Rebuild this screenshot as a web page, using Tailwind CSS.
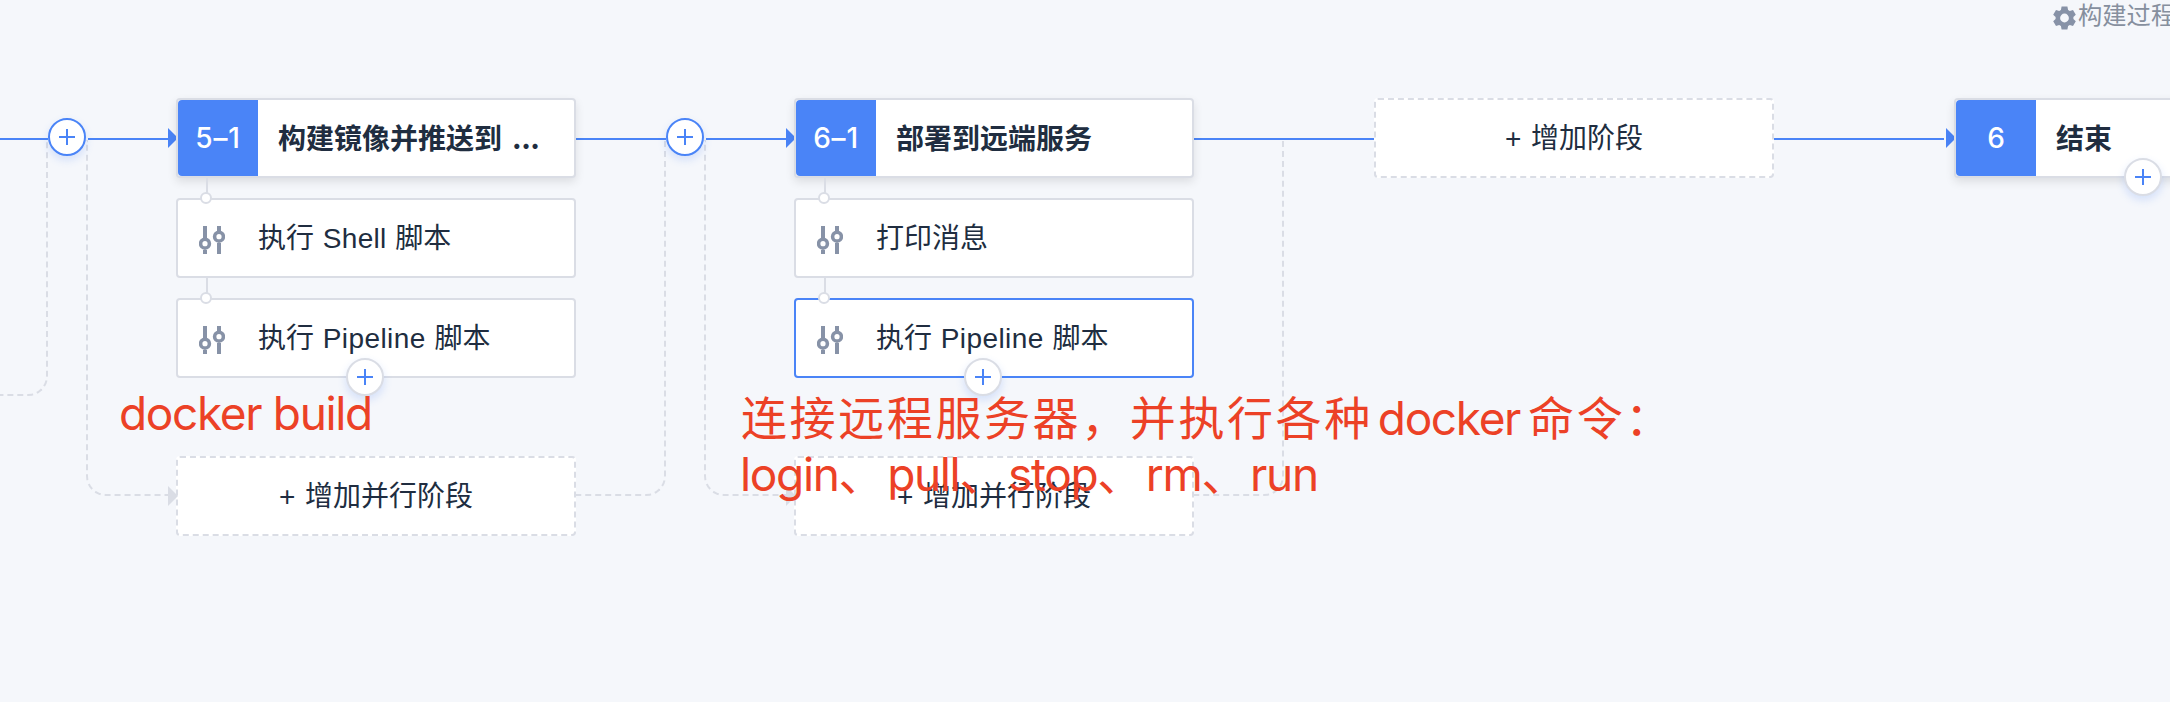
<!DOCTYPE html>
<html lang="zh-CN">
<head>
<meta charset="utf-8">
<title>构建流程</title>
<script src="https://cdn.jsdelivr.net/npm/@tailwindcss/browser@4"></script>
</head>
<body class="bg-[#f5f7fb]">
<svg class="hidden">
  <symbol id="sliders" viewBox="0 0 26 28">
    <path d="M6 0v13M6 24v4M20 0v6M20 17v11" fill="none" stroke="#8792a7" stroke-width="4"/>
    <circle cx="6" cy="17.7" r="4.4" fill="#fff" stroke="#8792a7" stroke-width="3.6"/>
    <circle cx="20" cy="10.7" r="4.4" fill="#fff" stroke="#8792a7" stroke-width="3.6"/>
  </symbol>
  <symbol id="plus" viewBox="0 0 16 16">
    <path d="M8 0v16M0 8h16" fill="none" stroke="#4a84f7" stroke-width="2"/>
  </symbol>
  <symbol id="arrow" viewBox="0 0 10 20">
    <path d="M0 0L10 10L0 20z" fill="currentColor"/>
  </symbol>
</svg>

<main class="relative w-[2170px] h-[702px] overflow-hidden text-[28px] leading-[40px] text-[#202d40] whitespace-nowrap font-['Liberation_Sans','Noto_Sans_CJK_SC',sans-serif]">

  <!-- parallel branch lines -->
  <div class="absolute left-[-60px] top-[140px] w-[108px] h-[256px] border-r-2 border-b-2 border-dashed border-[#dadde5] rounded-br-[20px]"></div>
  <div class="absolute left-[86px] top-[140px] w-[90px] h-[356px] border-l-2 border-b-2 border-dashed border-[#dadde5] rounded-bl-[20px]"></div>
  <div class="absolute left-[576px] top-[140px] w-[90px] h-[356px] border-r-2 border-b-2 border-dashed border-[#dadde5] rounded-br-[20px]"></div>
  <div class="absolute left-[704px] top-[140px] w-[90px] h-[356px] border-l-2 border-b-2 border-dashed border-[#dadde5] rounded-bl-[20px]"></div>
  <div class="absolute left-[1194px] top-[140px] w-[90px] h-[356px] border-r-2 border-b-2 border-dashed border-[#dadde5] rounded-br-[20px]"></div>

  <!-- settings link -->
  <div class="absolute left-[2053px] top-0 flex gap-[2px] text-[24.3px] leading-8 text-[#868f9e]">
    <svg class="w-[23px] h-6 mt-[6px]" viewBox="0 0 23 24"><path fill="#8792a7" fill-rule="evenodd" d="M8.6 0.6h5.8l.7 3.3 1.7 1 3.2-1 2.8 4.9-2.4 2.2v2l2.4 2.2-2.8 4.9-3.2-1-1.7 1-.7 3.3H8.600l-.7-3.300-1.700-1-3.200 1-2.800-4.900 2.400-2.200v-2L.2 8.800 3 3.900l3.200 1 1.700-1zM11.500 7.600a4.400 4.400 0 1 0 0 8.800 4.400 4.400 0 1 0 0-8.800z"/></svg>
    <span>构建过程</span>
  </div>

  <div class="relative flex items-start pt-[98px]">
    <!-- connector -->
    <div class="flex items-start shrink-0 w-[176px]">
      <i class="shrink-0 w-12 h-[2px] mt-10 bg-[#4a84f7]"></i>
      <button class="shrink-0 flex items-center justify-center size-[38px] mt-5 rounded-full bg-white border-2 border-[#4a84f7] shadow-[0_4px_8px_rgba(74,132,247,0.2)]"><svg class="size-4"><use href="#plus"/></svg></button>
      <i class="shrink-0 w-20 h-[2px] mt-10 ml-[2px] bg-[#4a84f7]"></i>
      <svg class="shrink-0 w-[10px] h-5 mt-[30px] text-[#4a84f7]"><use href="#arrow"/></svg>
    </div>

    <!-- stage 5-1 -->
    <section class="relative shrink-0 w-[400px]">
      <header class="flex h-20 rounded border-2 border-[#dadde5] bg-white shadow-[0_4px_10px_rgba(0,0,0,0.1)]">
        <b class="flex items-center justify-center w-20 rounded-l bg-[#4a84f7] text-white font-medium font-[Inter] tracking-[0.8px]">5–1</b>
        <h2 class="ml-5 leading-[74px] font-bold font-['Noto_Sans_CJK_SC'] [word-spacing:4px]">构建镜像并推送到 ...</h2>
      </header>
      <div class="w-[2px] h-5 ml-[30px] bg-[#dadde5]"></div>
      <div class="relative flex items-center h-20 rounded border-2 border-[#dadde5] bg-white pl-[21px] gap-[33px]">
        <i class="absolute left-[22px] -top-2 size-3 rounded-full border-2 border-[#dadde5] bg-white"></i>
        <svg class="w-[26px] h-7 mt-1"><use href="#sliders"/></svg><span class="pt-[2px] [word-spacing:1px]">执行 <span class="tracking-[0.3px]">Shell</span> 脚本</span>
      </div>
      <div class="w-[2px] h-5 ml-[30px] bg-[#dadde5]"></div>
      <div class="relative flex items-center h-20 rounded border-2 border-[#dadde5] bg-white pl-[21px] gap-[33px]">
        <i class="absolute left-[22px] -top-2 size-3 rounded-full border-2 border-[#dadde5] bg-white"></i>
        <svg class="w-[26px] h-7 mt-1"><use href="#sliders"/></svg><span class="pt-[2px] [word-spacing:1px]">执行 <span class="tracking-[0.4px]">Pipeline</span> 脚本</span>
        <button class="absolute left-[168px] top-[58px] flex items-center justify-center size-[38px] rounded-full bg-white border-2 border-[#dadde5] shadow-[0_4px_8px_rgba(74,132,247,0.2)]"><svg class="size-4"><use href="#plus"/></svg></button>
      </div>
      <div class="relative flex items-center justify-center h-20 mt-[78px] rounded border-2 border-dashed border-[#dadde5] bg-white pt-[2px] [word-spacing:2px]">
        <svg class="absolute left-[-10px] top-7 w-[10px] h-5 text-[#dadde5]"><use href="#arrow"/></svg>
        + 增加并行阶段
      </div>
    </section>

    <!-- connector -->
    <div class="flex items-start shrink-0 w-[218px]">
      <i class="shrink-0 w-[90px] h-[2px] mt-10 bg-[#4a84f7]"></i>
      <button class="shrink-0 flex items-center justify-center size-[38px] mt-5 rounded-full bg-white border-2 border-[#4a84f7] shadow-[0_4px_8px_rgba(74,132,247,0.2)]"><svg class="size-4"><use href="#plus"/></svg></button>
      <i class="shrink-0 w-20 h-[2px] mt-10 ml-[2px] bg-[#4a84f7]"></i>
      <svg class="shrink-0 w-[10px] h-5 mt-[30px] text-[#4a84f7]"><use href="#arrow"/></svg>
    </div>

    <!-- stage 6-1 -->
    <section class="relative shrink-0 w-[400px]">
      <header class="flex h-20 rounded border-2 border-[#dadde5] bg-white shadow-[0_4px_10px_rgba(0,0,0,0.1)]">
        <b class="flex items-center justify-center w-20 rounded-l bg-[#4a84f7] text-white font-medium font-[Inter] tracking-[0.8px]">6–1</b>
        <h2 class="ml-5 leading-[74px] font-bold font-['Noto_Sans_CJK_SC']">部署到远端服务</h2>
      </header>
      <div class="w-[2px] h-5 ml-[30px] bg-[#dadde5]"></div>
      <div class="relative flex items-center h-20 rounded border-2 border-[#dadde5] bg-white pl-[21px] gap-[33px]">
        <i class="absolute left-[22px] -top-2 size-3 rounded-full border-2 border-[#dadde5] bg-white"></i>
        <svg class="w-[26px] h-7 mt-1"><use href="#sliders"/></svg><span class="pt-[2px]">打印消息</span>
      </div>
      <div class="w-[2px] h-5 ml-[30px] bg-[#dadde5]"></div>
      <div class="relative flex items-center h-20 rounded border-2 border-[#4a84f7] bg-white pl-[21px] gap-[33px]">
        <i class="absolute left-[22px] -top-2 size-3 rounded-full border-2 border-[#dadde5] bg-white"></i>
        <svg class="w-[26px] h-7 mt-1"><use href="#sliders"/></svg><span class="pt-[2px] [word-spacing:1px]">执行 <span class="tracking-[0.4px]">Pipeline</span> 脚本</span>
        <button class="absolute left-[168px] top-[58px] flex items-center justify-center size-[38px] rounded-full bg-white border-2 border-[#dadde5] shadow-[0_4px_8px_rgba(74,132,247,0.2)]"><svg class="size-4"><use href="#plus"/></svg></button>
      </div>
      <div class="relative flex items-center justify-center h-20 mt-[78px] rounded border-2 border-dashed border-[#dadde5] bg-white pt-[2px] [word-spacing:2px]">
        <svg class="absolute left-[-10px] top-7 w-[10px] h-5 text-[#dadde5]"><use href="#arrow"/></svg>
        + 增加并行阶段
      </div>
    </section>

    <i class="shrink-0 w-[180px] h-[2px] mt-10 bg-[#4a84f7]"></i>
    <div class="shrink-0 flex items-center justify-center w-[400px] h-20 rounded border-2 border-dashed border-[#dadde5] bg-white pt-[2px] [word-spacing:2px]">+ 增加阶段</div>
    <div class="flex items-start shrink-0 w-[180px]">
      <i class="shrink-0 w-[170px] h-[2px] mt-10 bg-[#4a84f7]"></i>
      <svg class="shrink-0 w-[10px] h-5 mt-[30px] ml-[2px] text-[#4a84f7]"><use href="#arrow"/></svg>
    </div>

    <!-- end stage -->
    <section class="relative shrink-0 w-[400px]">
      <header class="flex h-20 rounded border-2 border-[#dadde5] bg-white shadow-[0_4px_10px_rgba(0,0,0,0.1)]">
        <b class="flex items-center justify-center w-20 rounded-l bg-[#4a84f7] text-white font-medium font-[Inter]">6</b>
        <h2 class="ml-5 leading-[74px] font-bold font-['Noto_Sans_CJK_SC']">结束</h2>
      </header>
      <button class="absolute left-[170px] top-[60px] flex items-center justify-center size-[38px] rounded-full bg-white border-2 border-[#dadde5] shadow-[0_4px_8px_rgba(74,132,247,0.2)]"><svg class="size-4"><use href="#plus"/></svg></button>
    </section>
  </div>

  <!-- annotations -->
  <p class="absolute left-[119px] top-[385px] text-[46px] leading-[56px] text-[#ec4126] font-[Inter,'Noto_Sans_CJK_SC'] tracking-[-1.35px]">docker build</p>
  <div class="absolute left-[741px] top-[390px] text-[46px] leading-[56px] text-[#ec4126] font-[Inter,'Noto_Sans_CJK_SC']">
    <p><span class="tracking-[2.6px]">连接远程服务器，并执行各种</span><span class="tracking-[-1.35px] ml-[5px]">docker</span><span class="tracking-[2.6px] ml-2">命令：</span></p>
    <p class="tracking-[-1.35px] -ml-px">login<span class="tracking-[2.6px]">、</span>pull<span class="tracking-[2.6px]">、</span>stop<span class="tracking-[2.6px]">、</span>rm<span class="tracking-[2.6px]">、</span>run</p>
  </div>
</main>
</body>
</html>
